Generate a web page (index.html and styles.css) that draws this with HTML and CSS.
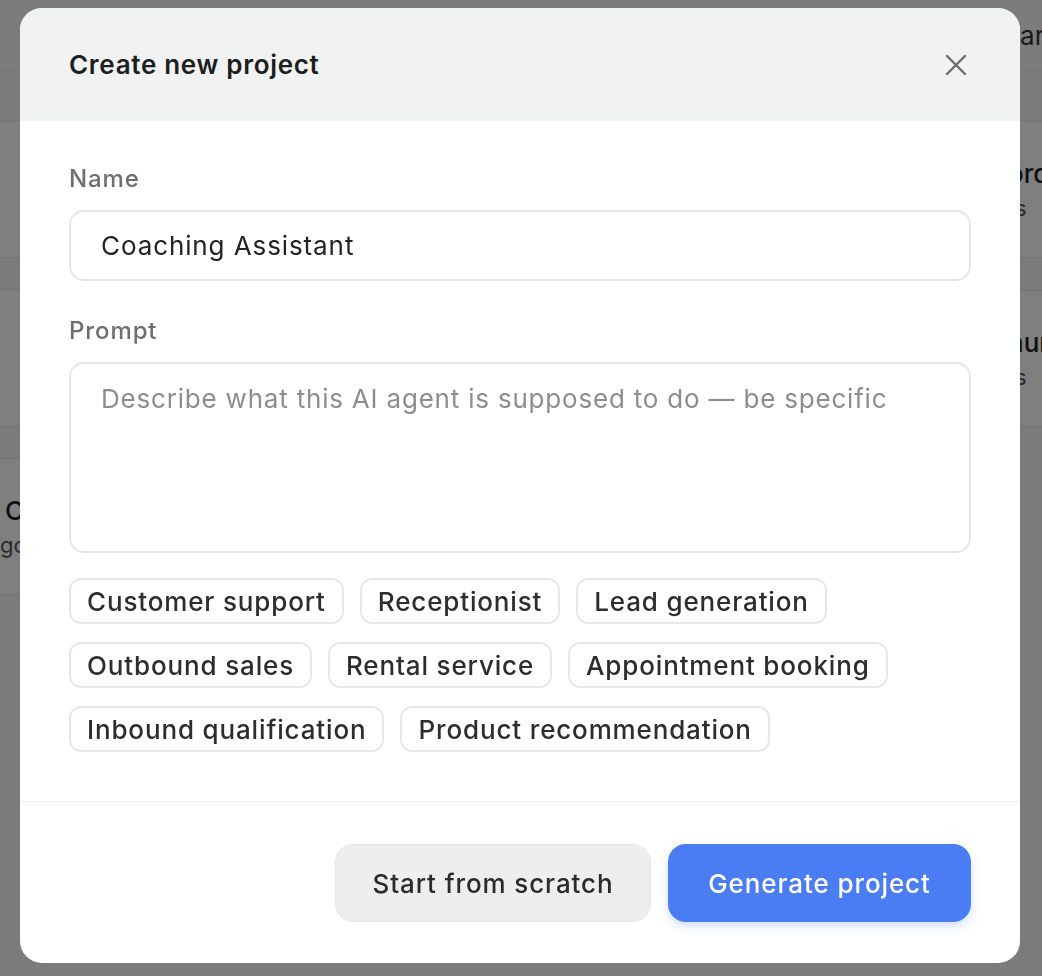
FILE: index.html
```html
<!DOCTYPE html>
<html lang="en">
<head>
<meta charset="utf-8">
<title>Create new project</title>
<link rel="stylesheet" href="styles.css">
</head>
<body>
<div class="page">
  <header class="topbar">
    <div class="topbar-fill"></div>
    <div class="search">Search</div>
  </header>
  <div class="toolbar"></div>
  <div class="columns">
    <div class="col col-left">
      <div class="card"></div>
      <div class="card"></div>
      <div class="card"><div class="card-title">Clinic</div><div class="card-sub">gone live</div></div>
    </div>
    <div class="col col-mid"></div>
    <div class="col col-right">
      <div class="card"><div class="card-title">orders</div><div class="card-sub">ts</div></div>
      <div class="card"><div class="card-title">nurture</div><div class="card-sub">ts</div></div>
    </div>
  </div>
</div>

<div class="overlay">
  <div class="modal" role="dialog" aria-label="Create new project">
    <div class="modal-header">
      <h2 class="modal-title">Create new project</h2>
      <button class="close-btn" aria-label="Close">
        <svg width="24" height="24" viewBox="0 0 24 24" fill="none" stroke="currentColor" stroke-width="2.4" stroke-linecap="round"><path d="M3 3L21 21M21 3L3 21"/></svg>
      </button>
    </div>
    <div class="modal-body">
      <label class="field-label">Name</label>
      <div class="input">Coaching Assistant</div>
      <label class="field-label prompt-label">Prompt</label>
      <div class="textarea"><span class="placeholder">Describe what this AI agent is supposed to do — be specific</span></div>
      <div class="chips">
        <span class="chip">Customer support</span>
        <span class="chip">Receptionist</span>
        <span class="chip">Lead generation</span>
        <span class="chip">Outbound sales</span>
        <span class="chip">Rental service</span>
        <span class="chip">Appointment booking</span>
        <span class="chip">Inbound qualification</span>
        <span class="chip">Product recommendation</span>
      </div>
    </div>
    <div class="modal-footer">
      <button class="btn btn-secondary">Start from scratch</button>
      <button class="btn btn-primary">Generate project</button>
    </div>
  </div>
</div>
</body>
</html>
```

FILE: styles.css
```css
* { box-sizing: border-box; }
html, body { margin: 0; padding: 0; }
body {
  font-family: Inter, "Open Sans", Arial, sans-serif;
  background: #f6f6f6;
  color: #1f2022;
  width: 1042px;
  height: 976px;
  overflow: hidden;
}

/* Background page */
.page { height: 976px; }
.topbar {
  height: 71px;
  display: flex;
  align-items: center;
  border-bottom: 1px solid #e4e4e4;
  background: #f8f8f8;
}
.topbar-fill { flex: 1; }
.search {
  width: 22px;
  font-size: 26px;
  color: #333;
  white-space: nowrap;
  overflow: hidden;
  text-indent: -32px;
}
.toolbar { height: 50px; }
.columns {
  display: flex;
  gap: 0;
}
.col { display: flex; flex-direction: column; }
.col-left { width: 60px; gap: 31px; }
.col-mid { flex: 1; }
.col-right { width: 57px; gap: 32px; }
.card {
  height: 137px;
  background: #ffffff;
  border-top: 1px solid #e9e9e9;
  border-bottom: 1px solid #e9e9e9;
  padding: 36px 0 0 23px;
  overflow: hidden;
  white-space: nowrap;
}
.col-left .card { padding-left: 5px; }
.col-left .card:nth-child(2) { height: 138px; }
.card-title { font-size: 26px; font-weight: 500; color: #1f2022; }
.card-sub { font-size: 22px; color: #555; margin-top: 6px; }
.col-left .card-sub { text-indent: -5px; }

/* Overlay & modal */
.overlay {
  position: fixed;
  inset: 0;
  background: rgba(0, 0, 0, 0.5);
  display: flex;
  align-items: flex-start;
  padding: 8px 22px 0 20px;
}
.modal {
  width: 1000px;
  height: 955px;
  background: #ffffff;
  border-radius: 22px;
  overflow: hidden;
  display: flex;
  flex-direction: column;
}
.modal-header {
  height: 113px;
  flex: none;
  background: #f1f2f2;
  display: flex;
  align-items: center;
  justify-content: space-between;
  padding: 0 52px 0 49px;
}
.modal-title {
  margin: 0;
  font-size: 26px;
  font-weight: 600;
  color: #1d1e20;
  letter-spacing: 0.7px;
}
.close-btn {
  border: 0;
  background: none;
  padding: 0;
  width: 24px;
  height: 24px;
  color: #6a6d70;
  display: flex;
}
.modal-body {
  flex: 1;
  padding: 43px 49px 0 49px;
  display: flex;
  flex-direction: column;
  border-bottom: 1px solid #ececec;
}
.field-label {
  font-size: 24px;
  font-weight: 500;
  color: #6b6e72;
  line-height: 30px;
  letter-spacing: 0.9px;
  margin-bottom: 16px;
}
.prompt-label { margin-top: 35px; }
.input, .textarea {
  width: 902px;
  border: 2px solid #e4e5e6;
  border-radius: 15px;
  padding: 0 30px;
  font-size: 26px;
  letter-spacing: 0.9px;
}
.input {
  height: 71px;
  display: flex;
  align-items: center;
  color: #222325;
}
.textarea {
  height: 191px;
  padding-top: 18px;
  letter-spacing: 0.8px;
}
.placeholder { color: #8b8e91; line-height: 34px; }
.chips {
  display: flex;
  flex-wrap: wrap;
  gap: 18px 16px;
  margin-top: 25px;
  width: 902px;
}
.chip {
  height: 46px;
  display: inline-flex;
  align-items: center;
  padding: 0 16px;
  border: 2px solid #e6e7e8;
  border-radius: 12px;
  font-size: 26px;
  font-weight: 500;
  letter-spacing: 0.85px;
  color: #2c2d30;
}
.modal-footer {
  height: 161px;
  flex: none;
  display: flex;
  justify-content: flex-end;
  align-items: flex-start;
  gap: 17px;
  padding: 42px 49px 0 49px;
}
.btn {
  height: 78px;
  border-radius: 18px;
  font-family: inherit;
  font-size: 26px;
  font-weight: 500;
  letter-spacing: 0.9px;
  padding: 0;
  cursor: pointer;
}
.btn-secondary {
  width: 316px;
  background: #eeeeef;
  border: 1px solid #e6e6e7;
  color: #2a2b2e;
}
.btn-primary {
  width: 303px;
  background: #4a7cf3;
  border: 0;
  color: #ffffff;
  box-shadow: 0 4px 10px rgba(74, 124, 243, 0.25);
}
```
